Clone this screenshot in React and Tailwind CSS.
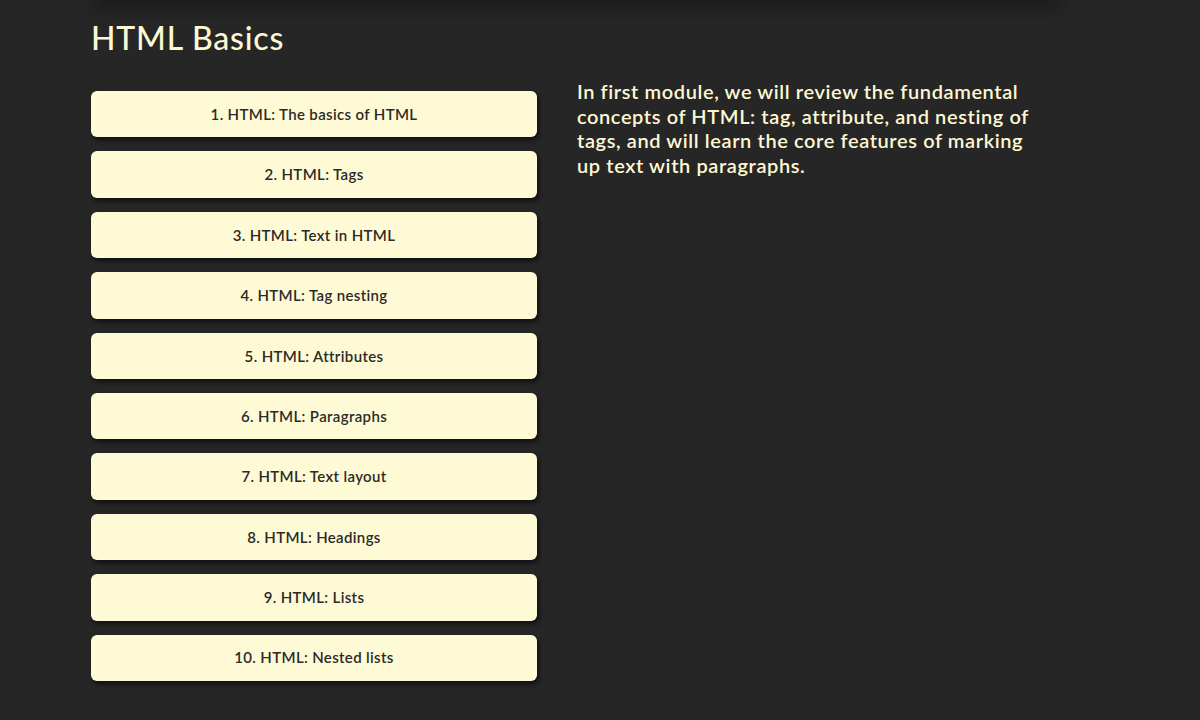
import React from "react";

const lessons = [
  "1. HTML: The basics of HTML",
  "2. HTML: Tags",
  "3. HTML: Text in HTML",
  "4. HTML: Tag nesting",
  "5. HTML: Attributes",
  "6. HTML: Paragraphs",
  "7. HTML: Text layout",
  "8. HTML: Headings",
  "9. HTML: Lists",
  "10. HTML: Nested lists",
];

export default function App() {
  return (
    <div
      className="min-h-[720px] w-full bg-[#262626] overflow-hidden"
      style={{ fontFamily: "Lato, 'Noto Sans', sans-serif" }}
    >
      <div className="ml-[91px] w-[972px]">
        <div className="h-0 mx-[10px] shadow-[0_0_18px_8px_rgba(0,0,0,0.35)]" />
        <h1 className="pt-[19px] text-[32px] leading-[38px] font-medium tracking-[0.8px] text-[#fdf8d3]">
          HTML Basics
        </h1>
        <div className="mt-[34px] flex gap-[40px]">
          <div className="w-[446px] shrink-0 flex flex-col gap-[14px]">
            {lessons.map((l) => (
              <div
                key={l}
                className="h-[46.4px] rounded-[6px] bg-[#fffad6] flex items-center justify-center text-[15px] font-semibold tracking-[0.35px] text-[#2b2a26] shadow-[2px_3px_5px_rgba(0,0,0,0.6)]"
              >
                {l}
              </div>
            ))}
          </div>
          <p className="w-[480px] shrink-0 -mt-[12px] text-[20px] leading-[24.5px] font-semibold tracking-[0.6px] text-[#fdf8d3]">
            In first module, we will review the fundamental
            <br />
            concepts of HTML: tag, attribute, and nesting of
            <br />
            tags, and will learn the core features of marking
            <br />
            up text with paragraphs.
          </p>
        </div>
      </div>
    </div>
  );
}
